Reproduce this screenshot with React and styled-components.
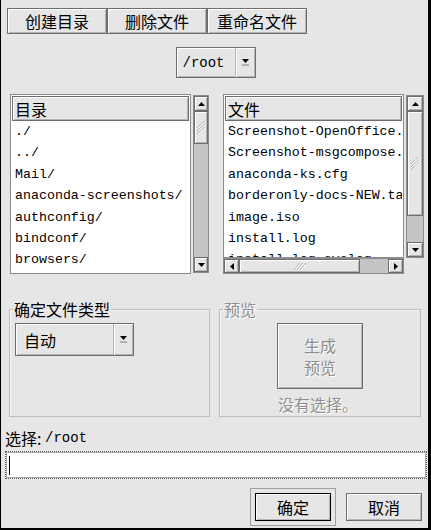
import React from 'react';
import styled, { createGlobalStyle } from 'styled-components';

const CJK = `"Noto Sans CJK SC", "Noto Sans CJK JP", sans-serif`;
const MONO = `"Liberation Mono", "Noto Sans CJK SC", monospace`;

const GlobalStyle = createGlobalStyle`
  html, body { margin: 0; padding: 0; background: #fff; }
  * { box-sizing: border-box; }
`;

const Window = styled.div`
  width: 431px;
  height: 530px;
  background: #e6e6e6;
  border-left: 1px solid #000;
  border-right: 3px solid #000;
  border-bottom: 2px solid #000;
  display: flex;
  flex-direction: column;
  font-family: ${CJK};
  color: #000;
  overflow: hidden;
`;

const raised = `
  background: #e6e6e6;
  border: 1px solid #6e6e6e;
  box-shadow: inset 1px 1px 0 #fff, inset -1px -1px 0 #b4b4b4;
`;

const Toolbar = styled.div`
  display: flex;
  padding: 8px 0 0 6px;
`;

const ToolButton = styled.button`
  ${raised}
  width: 100px;
  height: 26px;
  margin: 0;
  padding: 0;
  font: 16px/1 ${CJK};
  color: #000;
`;

const CenterRow = styled.div`
  display: flex;
  justify-content: center;
  padding-left: 2px;
  margin-top: 13px;
`;

const Combo = styled.div`
  ${raised}
  display: flex;
  width: ${p => p.$w}px;
  height: ${p => p.$h}px;
  margin: ${p => p.$m || 0};
`;

const ComboText = styled.span`
  flex: 1;
  display: flex;
  align-items: center;
  padding-left: ${p => p.$pad || 6}px;
  font: ${p => (p.$mono ? `14px/1 ${MONO}` : `16px/1 ${CJK}`)};
`;

const ComboArrow = styled.span`
  width: 20px;
  display: flex;
  align-items: center;
  justify-content: center;
  border-left: 1px solid #b4b4b4;
  box-shadow: inset 1px 0 0 #fff;
`;

const ListsRow = styled.div`
  display: flex;
  margin-top: 16px;
  padding-left: 9px;
  gap: 14px;
  height: 180px;
`;

const LeftPane = styled.div`
  display: flex;
  gap: 2px;
`;

const RightPane = styled.div`
  display: grid;
  grid-template-columns: 181px 18px;
  grid-template-rows: 164px 16px;
  column-gap: 2px;
`;

const ListFrame = styled.div`
  width: 181px;
  height: ${p => p.$h}px;
  border: 1px solid #8c8c8c;
  padding: 1px;
  background: #fff;
  display: flex;
  flex-direction: column;
  overflow: hidden;
`;

const ListHeader = styled.div`
  ${raised}
  flex: none;
  height: 25px;
  display: flex;
  align-items: center;
  padding-left: 2px;
  font: 16px/1 ${CJK};
`;

const ListItem = styled.div`
  flex: none;
  height: 21.4px;
  padding-left: 3px;
  font: 13.3px/21.4px ${MONO};
  white-space: nowrap;
  overflow: hidden;
`;

const ScrollBar = styled.div`
  display: flex;
  flex-direction: ${p => (p.$horizontal ? 'row' : 'column')};
  width: ${p => (p.$horizontal ? 'auto' : `${p.$w || 16}px`)};
  height: ${p => (p.$horizontal ? '16px' : 'auto')};
  margin: ${p => p.$m || 0};
  background: #c4c4c4;
  border: 1px solid #8c8c8c;
`;

const ScrollArrow = styled.div`
  ${raised}
  flex: none;
  width: ${p => (p.$horizontal ? '15px' : 'auto')};
  height: ${p => (p.$horizontal ? 'auto' : '15px')};
  display: flex;
  align-items: center;
  justify-content: center;
`;

const Trough = styled.div`
  flex: 1;
  display: flex;
  flex-direction: ${p => (p.$horizontal ? 'row' : 'column')};
`;

const Thumb = styled.div`
  ${raised}
  flex: none;
  display: flex;
  align-items: center;
  justify-content: center;
`;

const GroupsRow = styled.div`
  display: flex;
  gap: 9px;
  margin-top: 27px;
  padding-left: 8px;
`;

const Group = styled.fieldset`
  width: ${p => p.$w}px;
  height: 116px;
  margin: 0;
  padding: 0;
  min-width: 0;
  border: 1px solid #bcbcbc;
  box-shadow: inset 1px 1px 0 #f6f6f6;
  display: flex;
  flex-direction: column;
  align-items: ${p => (p.$center ? 'center' : 'flex-start')};
`;

const Legend = styled.legend`
  margin-left: 3px;
  padding: 0 1px;
  font: 16px/17px ${CJK};
  color: ${p => (p.$disabled ? '#8e8e8e' : '#000')};
  text-shadow: ${p => (p.$disabled ? '1px 1px 0 #fff' : 'none')};
`;

const PreviewButton = styled.div`
  ${raised}
  width: 86px;
  height: 66px;
  margin-top: 5px;
  display: flex;
  flex-direction: column;
  align-items: center;
  justify-content: center;
  font: 16px/22px ${CJK};
  color: #8e8e8e;
  text-shadow: 1px 1px 0 #fff;
`;

const Note = styled.div`
  margin-top: 6px;
  padding-right: 4px;
  font: 16px/18px ${CJK};
  color: #8e8e8e;
  text-shadow: 1px 1px 0 #fff;
`;

const SelectionLabel = styled.div`
  margin-top: 12px;
  padding-left: 4px;
  height: 18px;
  display: flex;
  align-items: center;
  font: 16px/18px ${CJK};
`;

const Path = styled.span`
  font: 14px/18px ${MONO};
`;

const Entry = styled.div`
  margin: 4px 1px 0 4px;
  height: 28px;
  background: #fff;
  border: 1px dotted #555;
  box-shadow: inset 0 0 0 1px #a8a8a8;
  display: flex;
  align-items: center;
  padding-left: 3px;
`;

const Caret = styled.span`
  width: 1px;
  height: 19px;
  background: #000;
`;

const Footer = styled.div`
  display: flex;
  justify-content: flex-end;
  align-items: center;
  gap: 10px;
  margin-top: 9px;
  padding-right: 6px;
`;

const DefaultFrame = styled.div`
  border: 1px solid #a0a0a0;
  padding: 4px;
`;

const DialogButton = styled.button`
  ${raised}
  border-color: ${p => (p.$default ? '#000' : '#6e6e6e')};
  width: 76px;
  height: 28px;
  margin: 0;
  padding: 0;
  font: 16px/1 ${CJK};
  color: #000;
`;

const DownIndicator = () => (
  <svg width="7" height="8" viewBox="0 0 7 8">
    <path d="M0 0h7L3.5 4z" fill="#000" />
    <rect x="0" y="5" width="7" height="2" fill="#b0b0b0" />
  </svg>
);

const ArrowGlyph = ({ dir }) => {
  const paths = {
    up: 'M0 4h7L3.5 0z',
    down: 'M0 0h7L3.5 4z',
    left: 'M4 0v7L0 3.5z',
    right: 'M0 0v7L4 3.5z',
  };
  const horiz = dir === 'left' || dir === 'right';
  return (
    <svg width={horiz ? 4 : 7} height={horiz ? 7 : 4} viewBox={horiz ? '0 0 4 7' : '0 0 7 4'}>
      <path d={paths[dir]} fill="#000" />
    </svg>
  );
};

const Grip = ({ horizontal }) => (
  <svg width={horizontal ? 12 : 9} height={horizontal ? 8 : 13} viewBox={horizontal ? '0 0 12 8' : '0 0 9 13'}>
    {[0, 3, 6].map(o =>
      horizontal ? (
        <g key={o}>
          <line x1={o} y1="8" x2={o + 6} y2="1" stroke="#a0a0a0" />
          <line x1={o + 1} y1="8" x2={o + 7} y2="1" stroke="#fff" />
        </g>
      ) : (
        <g key={o}>
          <line x1="0" y1={o + 7} x2="8" y2={o} stroke="#a0a0a0" />
          <line x1="1" y1={o + 7} x2="9" y2={o} stroke="#fff" />
        </g>
      )
    )}
  </svg>
);

// thumb: offset and size in px along the trough
const VScroll = ({ thumb, m, w }) => (
  <ScrollBar $m={m} $w={w}>
    <ScrollArrow><ArrowGlyph dir="up" /></ScrollArrow>
    <Trough>
      <Thumb style={{ marginTop: thumb[0], height: thumb[1] }}><Grip /></Thumb>
    </Trough>
    <ScrollArrow><ArrowGlyph dir="down" /></ScrollArrow>
  </ScrollBar>
);

const HScroll = ({ thumb }) => (
  <ScrollBar $horizontal>
    <ScrollArrow $horizontal><ArrowGlyph dir="left" /></ScrollArrow>
    <Trough $horizontal>
      <Thumb style={{ marginLeft: thumb[0], width: thumb[1] }}><Grip horizontal /></Thumb>
    </Trough>
    <ScrollArrow $horizontal><ArrowGlyph dir="right" /></ScrollArrow>
  </ScrollBar>
);

const dirs = ['./', '../', 'Mail/', 'anaconda-screenshots/', 'authconfig/', 'bindconf/', 'browsers/'];
const files = [
  'Screenshot-OpenOffice.org.png',
  'Screenshot-msgcompose.png',
  'anaconda-ks.cfg',
  'borderonly-docs-NEW.tar.gz',
  'image.iso',
  'install.log',
  'install.log.syslog',
];

export default function App() {
  return (
    <>
      <GlobalStyle />
      <Window>
        <Toolbar>
          <ToolButton>创建目录</ToolButton>
          <ToolButton>删除文件</ToolButton>
          <ToolButton>重命名文件</ToolButton>
        </Toolbar>

        <CenterRow>
          <Combo $w={80} $h={31}>
            <ComboText $mono>/root</ComboText>
            <ComboArrow><DownIndicator /></ComboArrow>
          </Combo>
        </CenterRow>

        <ListsRow>
          <LeftPane>
            <ListFrame $h={180}>
              <ListHeader>目录</ListHeader>
              {dirs.map(d => <ListItem key={d}>{d}</ListItem>)}
            </ListFrame>
            <VScroll thumb={[0, 33]} m="1px 0 1px 0" />
          </LeftPane>
          <RightPane>
            <ListFrame $h={164}>
              <ListHeader>文件</ListHeader>
              {files.map(f => <ListItem key={f}>{f}</ListItem>)}
            </ListFrame>
            <VScroll thumb={[0, 105]} m="1px 0 0 0" w={18} />
            <HScroll thumb={[0, 121]} />
          </RightPane>
        </ListsRow>

        <GroupsRow>
          <Group $w={201}>
            <Legend>确定文件类型</Legend>
            <Combo $w={119} $h={33} $m="5px 0 0 5px">
              <ComboText $pad={8}>自动</ComboText>
              <ComboArrow><DownIndicator /></ComboArrow>
            </Combo>
          </Group>
          <Group $w={202} $center>
            <Legend $disabled>预览</Legend>
            <PreviewButton>
              <span>生成</span>
              <span>预览</span>
            </PreviewButton>
            <Note>没有选择。</Note>
          </Group>
        </GroupsRow>

        <SelectionLabel>
          选择:&nbsp;<Path>/root</Path>
        </SelectionLabel>
        <Entry><Caret /></Entry>

        <Footer>
          <DefaultFrame>
            <DialogButton $default>确定</DialogButton>
          </DefaultFrame>
          <DialogButton>取消</DialogButton>
        </Footer>
      </Window>
    </>
  );
}
